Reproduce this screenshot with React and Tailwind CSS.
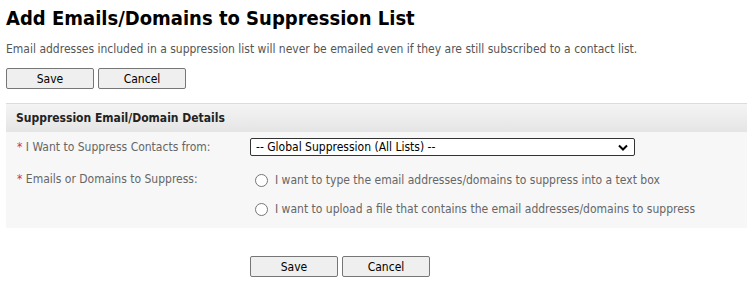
import React from "react";

function Btn({ children }) {
  return (
    <button className="w-[88px] h-[21px] bg-[#efefef] border border-[#767676] rounded-[2px] text-[12px] leading-none text-black">
      {children}
    </button>
  );
}

function Radio() {
  return <span className="inline-block w-[13px] h-[13px] rounded-full border border-[#767676] bg-white shrink-0" />;
}

export default function App() {
  return (
    <div className="w-[747px] h-[285px] bg-white font-['DejaVu_Sans_Condensed','DejaVu_Sans',sans-serif] text-[12px] overflow-hidden">
      <div className="pl-[6px] pt-[6px]">
        <h1 className="text-[20px] leading-[24px] font-bold text-black">Add Emails/Domains to Suppression List</h1>
        <p className="mt-[11px] text-[#555] leading-[16px]">
          Email addresses included in a suppression list will never be emailed even if they are still subscribed to a contact list.
        </p>
        <div className="mt-[11px] flex gap-[4px]">
          <Btn>Save</Btn>
          <Btn>Cancel</Btn>
        </div>
      </div>
      <div className="ml-[6px] mt-[14px] bg-[#f7f7f7] border-t border-[#dcdcdc]">
        <div className="h-[28px] px-[10px] flex items-center font-bold text-[#222] bg-gradient-to-b from-[#f4f4f4] to-[#e5e5e5]">
          Suppression Email/Domain Details
        </div>
        <div className="pb-[10px]">
          <div className="flex items-center h-[30px]">
            <div className="w-[244px] pl-[11px] text-[#666]"><span className="text-[#e03030]">*</span> I Want to Suppress Contacts from:</div>
            <div className="w-[385px] h-[18px] bg-white border border-[#333] rounded-[2px] flex items-center justify-between pl-[5px] pr-[6px] text-black">
              <span>-- Global Suppression (All Lists) --</span>
              <svg width="10" height="7" viewBox="0 0 10 7"><path d="M1 1.5 L5 5.5 L9 1.5" stroke="#000" strokeWidth="2" fill="none" /></svg>
            </div>
          </div>
          <div className="flex">
            <div className="w-[244px] pl-[11px] text-[#666] pt-[8px]"><span className="text-[#e03030]">*</span> Emails or Domains to Suppress:</div>
            <div className="flex flex-col gap-[11px] pl-[5px] pt-[9px] text-[#666]">
              <label className="flex items-center gap-[7px]"><Radio /><span>I want to type the email addresses/domains to suppress into a text box</span></label>
              <label className="flex items-center gap-[7px]"><Radio /><span>I want to upload a file that contains the email addresses/domains to suppress</span></label>
            </div>
          </div>
        </div>
      </div>
      <div className="mt-[28px] pl-[250px] flex gap-[4px]">
        <Btn>Save</Btn>
        <Btn>Cancel</Btn>
      </div>
    </div>
  );
}
